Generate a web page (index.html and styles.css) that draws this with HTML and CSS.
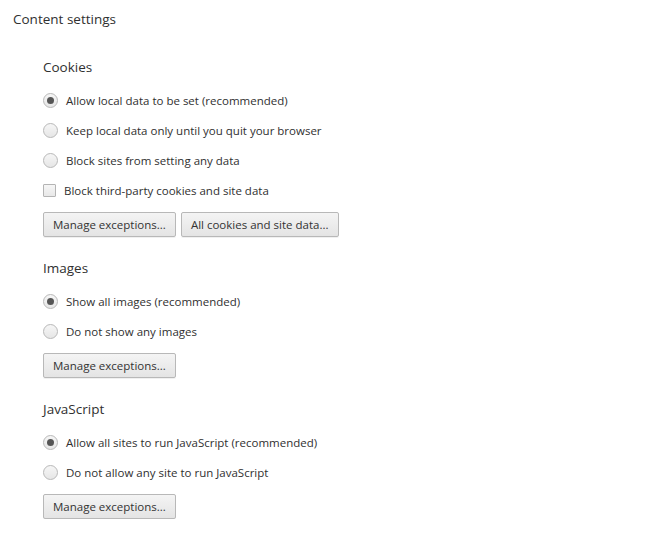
FILE: index.html
```html
<!DOCTYPE html>
<html>
<head>
<meta charset="utf-8">
<link rel="stylesheet" href="styles.css">
</head>
<body>
<div class="page">
  <h1 class="title">Content settings</h1>
  <section class="section">
    <h2 class="heading">Cookies</h2>
    <div class="option"><span class="radio checked"></span><span class="label">Allow local data to be set (recommended)</span></div>
    <div class="option"><span class="radio"></span><span class="label">Keep local data only until you quit your browser</span></div>
    <div class="option"><span class="radio"></span><span class="label">Block sites from setting any data</span></div>
    <div class="option"><span class="check"></span><span class="label label-check">Block third-party cookies and site data</span></div>
    <div class="buttons"><button class="btn">Manage exceptions...</button><button class="btn">All cookies and site data...</button></div>
  </section>
  <section class="section">
    <h2 class="heading">Images</h2>
    <div class="option"><span class="radio checked"></span><span class="label">Show all images (recommended)</span></div>
    <div class="option"><span class="radio"></span><span class="label">Do not show any images</span></div>
    <div class="buttons"><button class="btn">Manage exceptions...</button></div>
  </section>
  <section class="section">
    <h2 class="heading">JavaScript</h2>
    <div class="option"><span class="radio checked"></span><span class="label">Allow all sites to run JavaScript (recommended)</span></div>
    <div class="option"><span class="radio"></span><span class="label">Do not allow any site to run JavaScript</span></div>
    <div class="buttons"><button class="btn">Manage exceptions...</button></div>
  </section>
</div>
</body>
</html>
```
FILE: styles.css
```css
html, body {
  margin: 0;
  padding: 0;
  background: #fff;
}
body {
  font-family: "Open Sans", "Noto Sans", sans-serif;
  color: #303030;
  font-size: 11.5px;
}
.page {
  display: flex;
  flex-direction: column;
  padding: 8px 0 0 13px;
}
.title {
  margin: 0;
  font-size: 13.5px;
  font-weight: normal;
  line-height: 22px;
  height: 22px;
}
.section {
  display: flex;
  flex-direction: column;
  padding-left: 30px;
  margin-top: 26px;
}
.section + .section {
  margin-top: 20px;
}
.heading {
  margin: 0;
  font-size: 13.5px;
  font-weight: normal;
  line-height: 22px;
  height: 22px;
  margin-bottom: 7px;
}
.option {
  display: flex;
  align-items: center;
  height: 30px;
}
.radio {
  box-sizing: border-box;
  width: 15px;
  height: 15px;
  border-radius: 50%;
  border: 1px solid #b8b8b8;
  background: linear-gradient(#f6f6f6, #e6e6e6);
  display: flex;
  align-items: center;
  justify-content: center;
  flex: none;
  margin-right: 8px;
}
.radio.checked::after {
  content: "";
  width: 7px;
  height: 7px;
  border-radius: 50%;
  background: #555;
}
.check {
  box-sizing: border-box;
  width: 13px;
  height: 13px;
  border: 1px solid #b4b4b4;
  border-radius: 1px;
  background: linear-gradient(#f6f6f6, #e8e8e8);
  flex: none;
  margin-right: 8px;
}
.label {
  white-space: nowrap;
}
.buttons {
  display: flex;
  gap: 5px;
  margin-top: 7px;
}
.btn {
  font-family: inherit;
  font-size: 11.5px;
  color: #333;
  height: 25px;
  padding: 0 9px;
  border: 1px solid #b8b8b8;
  border-radius: 2px;
  background: linear-gradient(#f4f4f4, #e4e4e4);
  box-shadow: 0 1px 0 rgba(0,0,0,0.06);
  line-height: 23px;
}
```
